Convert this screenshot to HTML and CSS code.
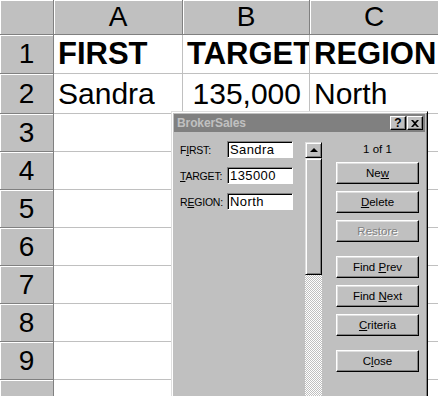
FILE: index.html
```html
<!DOCTYPE html>
<html>
<head>
<meta charset="utf-8">
<link rel="stylesheet" href="styles.css">
</head>
<body>
<div class="sheet">
  <div class="hd corner"></div>
  <div class="hd col">A</div>
  <div class="hd col">B</div>
  <div class="hd col">C</div>

  <div class="hd row">1</div>
  <div class="cell bold">FIRST</div>
  <div class="cell bold">TARGET</div>
  <div class="cell bold">REGION</div>

  <div class="hd row">2</div>
  <div class="cell">Sandra</div>
  <div class="cell num">135,000</div>
  <div class="cell">North</div>

  <div class="hd row">3</div><div class="cell"></div><div class="cell"></div><div class="cell"></div>
  <div class="hd row">4</div><div class="cell"></div><div class="cell"></div><div class="cell"></div>
  <div class="hd row">5</div><div class="cell"></div><div class="cell"></div><div class="cell"></div>
  <div class="hd row">6</div><div class="cell"></div><div class="cell"></div><div class="cell"></div>
  <div class="hd row">7</div><div class="cell"></div><div class="cell"></div><div class="cell"></div>
  <div class="hd row">8</div><div class="cell"></div><div class="cell"></div><div class="cell"></div>
  <div class="hd row">9</div><div class="cell"></div><div class="cell"></div><div class="cell"></div>
  <div class="hd row"></div><div class="cell"></div><div class="cell"></div><div class="cell"></div>
</div>

<div class="dialog">
  <div class="titlebar">
    <span class="title">BrokerSales</span>
    <span class="tbtns">
      <span class="tbtn">?</span>
      <span class="tbtn close">
        <svg width="8" height="7" viewBox="0 0 8 7"><path d="M0 0h2l2 2 2-2h2L5 3.5 8 7H6L4 5 2 7H0l3-3.5z" fill="#000"/></svg>
      </span>
    </span>
  </div>
  <div class="dbody">
    <div class="fields">
      <div class="frow"><span class="lbl">F<u>I</u>RST:</span><span class="tbox">Sandra</span></div>
      <div class="frow"><span class="lbl"><u>T</u>ARGET:</span><span class="tbox">135000</span></div>
      <div class="frow"><span class="lbl">R<u>E</u>GION:</span><span class="tbox">North</span></div>
    </div>
    <div class="scroll">
      <div class="sbtn"><span class="arrow"></span></div>
      <div class="thumb"></div>
      <div class="track"></div>
    </div>
    <div class="buttons">
      <div class="count">1 of 1</div>
      <div class="btn"><span>Ne<u>w</u></span></div>
      <div class="btn"><span><u>D</u>elete</span></div>
      <div class="btn disabled"><span>Restore</span></div>
      <div class="btn gap"><span>Find <u>P</u>rev</span></div>
      <div class="btn"><span>Find <u>N</u>ext</span></div>
      <div class="btn"><span><u>C</u>riteria</span></div>
      <div class="btn gap"><span>C<u>l</u>ose</span></div>
    </div>
  </div>
</div>
</body>
</html>
```

FILE: styles.css
```css
html, body {
  margin: 0;
  padding: 0;
  width: 438px;
  height: 396px;
  overflow: hidden;
  background: #fff;
}

.sheet {
  display: grid;
  grid-template-columns: 54px 129px 127px 129px;
  grid-template-rows: 35px 39px 40px repeat(8, 38px);
  font-family: "Liberation Sans", Arial, sans-serif;
  color: #000;
}

.hd {
  background: #c0c0c0;
  box-sizing: border-box;
  border-right: 1px solid #808080;
  border-bottom: 1px solid #808080;
  box-shadow: inset 1px 1px #fff;
  font-size: 28px;
  display: flex;
  align-items: center;
  justify-content: center;
}

.cell {
  box-sizing: border-box;
  border-right: 1px solid #c0c0c0;
  border-bottom: 1px solid #c0c0c0;
  font-size: 30px;
  display: flex;
  align-items: center;
  padding-left: 4px;
  overflow: hidden;
  white-space: nowrap;
}

.cell.bold { font-weight: bold; font-size: 31px; }
.cell.num { justify-content: flex-end; padding-left: 0; padding-right: 8px; }

/* Dialog */
.dialog {
  position: absolute;
  left: 171px;
  top: 111px;
  width: 257px;
  height: 300px;
  box-sizing: border-box;
  background: #c0c0c0;
  border: 1px solid;
  border-color: #dfdfdf #000 #000 #dfdfdf;
  box-shadow: inset 1px 1px #fff, inset -1px -1px #808080;
  padding: 2px;
  font-family: "Liberation Sans", Arial, sans-serif;
  font-size: 11px;
  color: #000;
}

.titlebar {
  height: 18px;
  background: #808080;
  display: flex;
  align-items: center;
  justify-content: space-between;
  padding: 0 2px 0 3px;
}

.title {
  color: #c0c0c0;
  font-weight: bold;
  font-size: 12px;
  letter-spacing: -0.1px;
}

.tbtns { display: flex; gap: 1px; }

.tbtn {
  width: 16px;
  height: 14px;
  box-sizing: border-box;
  background: #c0c0c0;
  border: 1px solid;
  border-color: #fff #000 #000 #fff;
  box-shadow: inset -1px -1px #808080;
  display: flex;
  align-items: center;
  justify-content: center;
  font-weight: bold;
  font-size: 12px;
  line-height: 1;
}

.dbody {
  display: flex;
  padding-top: 9px;
  padding-left: 6px;
}

.fields {
  display: flex;
  flex-direction: column;
  gap: 9px;
  width: 113px;
}

.frow {
  display: flex;
  align-items: center;
  height: 17px;
}

.lbl {
  width: 47px;
  font-size: 10.5px;
  letter-spacing: -0.2px;
  white-space: nowrap;
}

.tbox {
  width: 66px;
  height: 17px;
  box-sizing: border-box;
  background: #fff;
  border: 1px solid;
  border-color: #808080 #fff #fff #808080;
  box-shadow: inset 1px 1px #000;
  padding: 0 0 0 2px;
  font-size: 13px;
  letter-spacing: 0.4px;
  line-height: 15px;
  white-space: nowrap;
  overflow: hidden;
}

.scroll {
  margin-left: 12px;
  margin-top: 1px;
  width: 17px;
  display: flex;
  flex-direction: column;
  height: 260px;
}

.sbtn, .thumb {
  box-sizing: border-box;
  background: #c0c0c0;
  border: 1px solid;
  border-color: #dfdfdf #000 #000 #dfdfdf;
  box-shadow: inset 1px 1px #fff, inset -1px -1px #808080;
}

.sbtn {
  height: 16px;
  display: flex;
  align-items: center;
  justify-content: center;
}

.arrow {
  width: 0;
  height: 0;
  border-left: 4px solid transparent;
  border-right: 4px solid transparent;
  border-bottom: 4px solid #000;
  margin-top: -1px;
}

.thumb { height: 117px; }

.track {
  flex: 1;
  background-image: repeating-conic-gradient(#fff 0 25%, #c0c0c0 0 50%);
  background-size: 2px 2px;
}

.buttons {
  margin-left: 14px;
  width: 83px;
  display: flex;
  flex-direction: column;
  gap: 7px;
}

.count {
  height: 14px;
  text-align: center;
  line-height: 16px;
  font-size: 11.5px;
}

.btn {
  height: 22px;
  box-sizing: border-box;
  border: 1px solid;
  border-color: #fff #000 #000 #fff;
  box-shadow: inset -1px -1px #808080, inset 1px 1px #dfdfdf;
  background: #c0c0c0;
  display: flex;
  align-items: center;
  justify-content: center;
  font-size: 11.5px;
}

.btn.gap { margin-top: 7px; }

.btn.disabled {
  color: #808080;
  text-shadow: 1px 1px #fff;
}

u { text-underline-offset: 1px; }
```
